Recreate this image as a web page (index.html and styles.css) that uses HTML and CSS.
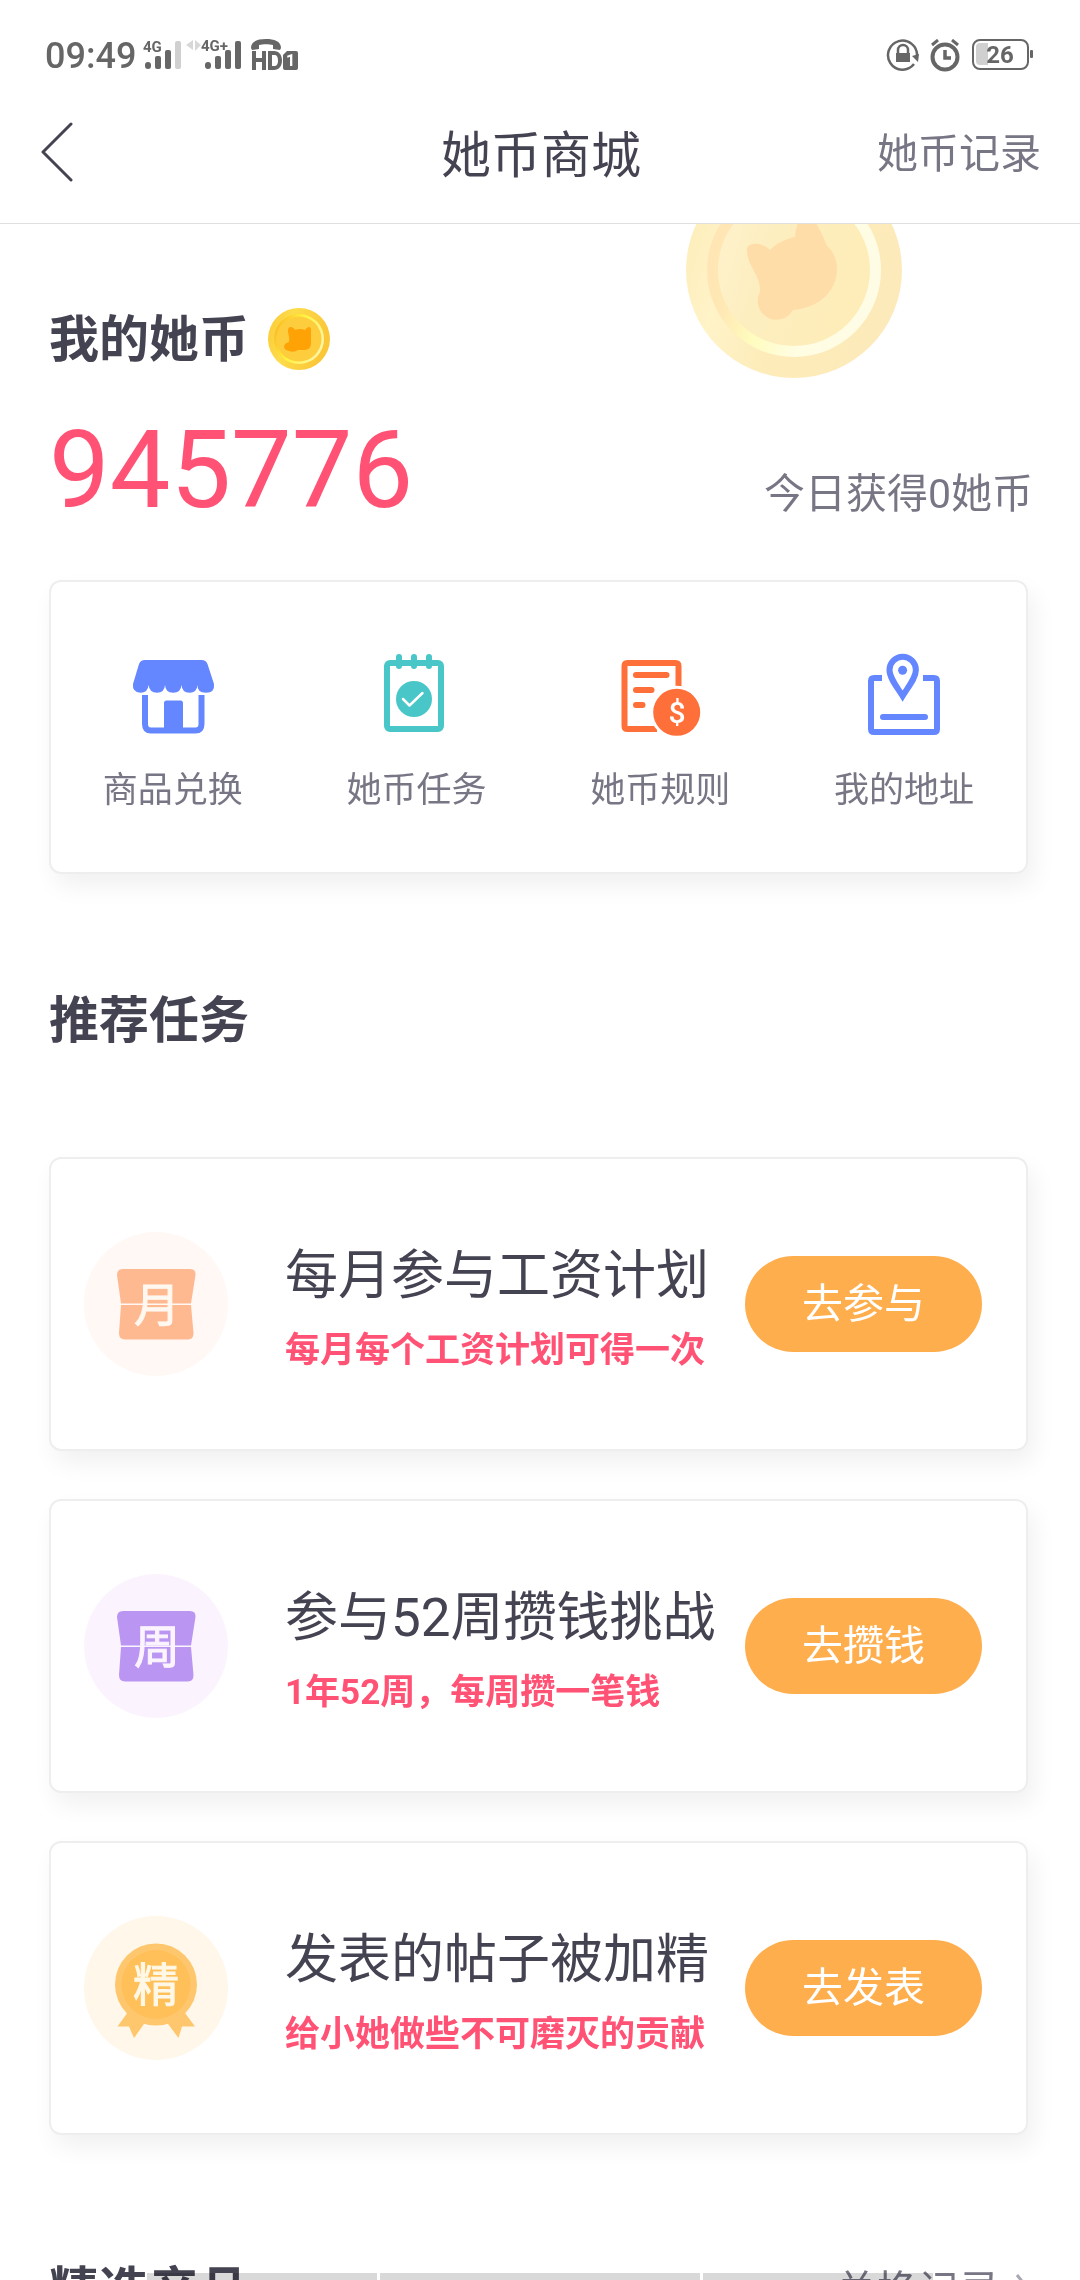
FILE: index.html
```html
<!DOCTYPE html>
<html lang="zh-CN">
<head>
<meta charset="utf-8">
<meta name="viewport" content="width=device-width, initial-scale=1">
<title>她币商城</title>
<link rel="stylesheet" href="styles.css">
</head>
<body>
<div class="app">
  <div class="status">
    <div class="status-group">
      <span class="clock">09:49</span>
      <svg class="signal" width="158" height="36" viewBox="0 2 158 36" fill="#666">
        <text x="0" y="16" font-size="15">4G</text>
        <rect x="2" y="26" width="6" height="7" rx="3"/>
        <rect x="12" y="20" width="6" height="13" rx="2"/>
        <rect x="22" y="14" width="6" height="19" rx="2"/>
        <rect x="32" y="5" width="6" height="28" rx="2" fill="#d0d0d0"/>
        <path d="M50 4v10l-7-5zM52 4l6 5-6 6z" fill="#d8d8d8"/>
        <text x="58" y="15" font-size="15">4G+</text>
        <rect x="62" y="26" width="6" height="7" rx="3"/>
        <rect x="72" y="20" width="6" height="13" rx="2"/>
        <rect x="82" y="14" width="6" height="19" rx="2"/>
        <rect x="92" y="5" width="6" height="28" rx="2"/>
        <path d="M108 12C108 5 115 3 123 3s15 2 15 9l-1 2-7-1V9c-4-1-10-1-14 0v4l-7 1z"/>
        <path d="M109 15h4v7h6v-7h4v19h-4v-8h-6v8h-4zM125 15h6c5 0 8 4 8 9.500s-3 9.500-8 9.500h-6zM129 19v11h2c3 0 4-2 4-5.500s-1-5.500-4-5.500z" fill-rule="evenodd"/>
        <path d="M144 15h9q2 0 2 2v15q0 2-2 2h-11q-2 0-2-2V19z"/>
        <text x="143" y="30" font-size="16" fill="#fff">1</text>
      </svg>
    </div>
    <div class="status-group">
      <svg width="34" height="34" viewBox="0 1 34 34" fill="none" stroke="#666" stroke-width="2.500">
        <path d="M31 18A14.500 14.500 0 1 0 28 26"/>
        <path d="M26 18l7-2-1 8z" fill="#666" stroke="none"/>
        <path d="M12 16v-4a5 5 0 0 1 10 0v4"/>
        <rect x="10" y="15" width="14" height="9" fill="#666" stroke="none"/>
      </svg>
      <svg width="30" height="34" viewBox="0 1 30 34" fill="none" stroke="#666" stroke-width="4">
        <circle cx="15" cy="19" r="12.500"/>
        <path d="M15 12v8h6" stroke-width="3.500"/>
        <path d="M2 7l6-5M28 7l-6-5" stroke-width="3"/>
      </svg>
      <svg class="battery" width="62" height="34" viewBox="0 2 62 34">
        <rect x="2" y="3" width="55" height="29" rx="7" fill="none" stroke="#666" stroke-width="2"/>
        <path d="M17 6v22H9q-4 0-4-4V10q0-4 4-4z" fill="#d0d0d0"/>
        <rect x="59" y="13" width="3" height="8" rx="1" fill="#666"/>
        <text x="29" y="26" font-size="24" text-anchor="middle" fill="#666">26</text>
      </svg>
    </div>
  </div>

  <header class="nav">
    <button class="back" type="button" aria-label="返回">
      <svg width="32" height="60" viewBox="0 0 32 60" fill="none" stroke="#444352" stroke-width="3" stroke-linecap="round" stroke-linejoin="round"><path d="M30 2L2 30l28 28"/></svg>
    </button>
    <h1>她币商城</h1>
    <a class="nav-link" href="#records">她币记录</a>
  </header>

  <main class="content">
    <svg class="coin-bg" width="218" height="218" viewBox="0 0 218 218">
      <defs>
        <linearGradient id="rim" x1="0" y1="0" x2="1" y2="0.300"><stop offset="0" stop-color="#fdebb5"/><stop offset=".3" stop-color="#fff3c8"/><stop offset=".6" stop-color="#fdecb9"/><stop offset="1" stop-color="#fdeaba"/></linearGradient>
        <linearGradient id="ring" x1="0" y1="0.300" x2="1" y2=".6"><stop offset="0" stop-color="#ffe5b4"/><stop offset=".2" stop-color="#ffe8b4"/><stop offset=".4" stop-color="#fffcbe"/><stop offset=".65" stop-color="#fffde2"/><stop offset="1" stop-color="#fffce6"/></linearGradient>
        <linearGradient id="face" x1="0" y1="0" x2="1" y2="0.300"><stop offset="0" stop-color="#fff3ce"/><stop offset=".4" stop-color="#fdeec0"/><stop offset="1" stop-color="#feedb8"/></linearGradient>
      </defs>
      <circle cx="109" cy="109" r="108" fill="url(#rim)"/>
      <circle cx="109" cy="109" r="87" fill="url(#ring)"/>
      <circle cx="109" cy="109" r="76" fill="url(#face)"/>
      <path d="M62 90C61 83 69 82 74 83C79 84 82 86 85 89C92 82 100 78 110 76C111 66 113 58 120 52C127 52 138 73 142 85C149 91 152 99 152 108C152 130 134 147 108 149A18.300 18.300 0 1 1 75 131C76 114 63 107 62 90Z" fill="#ffdda8"/>
    </svg>

    <section class="balance">
      <h2 class="heading">我的她币
        <svg width="64" height="64" viewBox="0 0 64 64">
          <defs><linearGradient id="srim" x1="0" y1="0" x2="1" y2="0.300"><stop offset="0" stop-color="#fbc838"/><stop offset=".4" stop-color="#fddc4a"/><stop offset="1" stop-color="#fbc638"/></linearGradient>
          <linearGradient id="sring" x1="0" y1="0.200" x2="1" y2=".6"><stop offset="0" stop-color="#fbb522"/><stop offset=".45" stop-color="#fff23c"/><stop offset="1" stop-color="#fff6a8"/></linearGradient></defs>
          <circle cx="32" cy="31" r="31" fill="url(#srim)"/>
          <circle cx="32" cy="31" r="25" fill="url(#sring)"/>
          <circle cx="32" cy="31" r="22.500" fill="#fdcd3e"/>
          <path d="M21 22C21 18 26 18 28 22Q33 20 38 22C41 18 44 18 44 22V35C44 40 41 42 37 42H31Q27 45 22 43C15 42 16 35 22 34C23 29 21 27 21 22Z" fill="#ffa205"/>
        </svg>
      </h2>
      <div class="balance-row">
        <strong class="amount">945776</strong>
        <span class="today">今日获得0她币</span>
      </div>
    </section>

    <nav class="card shortcuts">
      <a href="#exchange">
        <svg width="90" height="90" viewBox="0 0 90 90">
          <path d="M17 10H73.500Q78 10 79.500 14L86 34Q87 42.700 78 42.700T69.500 35Q69 42.700 61.500 42.700T53.500 35Q53 42.700 45.200 42.700T37 35Q36.500 42.700 29 42.700T20.500 35Q20 42.700 12.500 42.700Q4 42 5 34L11 14Q12.500 10 17 10Z" fill="#6487ff"/>
          <path d="M17 45V74Q17 80.500 23 80.500H67.500Q73.500 80.500 73.500 74V45" fill="none" stroke="#6487ff" stroke-width="6"/>
          <path d="M36 81V53q0-2.500 2.500-2.500h14q2.500 0 2.500 2.500v28z" fill="#6487ff"/>
        </svg>
        <span>商品兑换</span>
      </a>
      <a href="#tasks">
        <svg width="90" height="90" viewBox="0 0 90 90" fill="none" stroke="#48c6c8" stroke-width="6" stroke-linecap="round" stroke-linejoin="round">
          <rect x="15" y="13" width="54" height="66" rx="3"/>
          <path d="M27 7v9M42 7v9M57 7v9"/>
          <circle cx="42" cy="49" r="18" fill="#48c6c8" stroke="none"/>
          <path d="M31 49l6.500 6.500L50.500 43" stroke="#fff" stroke-width="2.500"/>
        </svg>
        <span>她币任务</span>
      </a>
      <a href="#rules">
        <svg width="90" height="90" viewBox="0 0 90 90" fill="none" stroke="#ff6f3a" stroke-width="6">
          <path d="M63.500 36V16q0-3-3-3H12.500q-3 0-3 3V76q0 3 3 3H42"/>
          <path d="M21 25H51.500M21 40H36.500M21 55H27.500" stroke-linecap="round"/>
          <circle cx="61.700" cy="62.300" r="25" fill="#ff6f3a" stroke="#fff" stroke-width="3"/>
          <text x="62" y="73" font-size="30" font-weight="500" text-anchor="middle" fill="#fff" stroke="none">$</text>
        </svg>
        <span>她币规则</span>
      </a>
      <a href="#address">
        <svg width="90" height="90" viewBox="0 0 90 90" fill="none" stroke="#6487ff" stroke-width="6">
          <path d="M23 28H15q-3 0-3 3V79q0 3 3 3H75q3 0 3-3V31q0-3-3-3H64"/>
          <path d="M43.600 46C38 37 30.500 28 30.500 20a13.200 13.200 0 0 1 26.400 0C56.900 28 49 37 43.600 46Z"/>
          <circle cx="43.600" cy="20.300" r="4.500" fill="#6487ff" stroke="none"/>
          <path d="M24 67H66" stroke-linecap="round"/>
        </svg>
        <span>我的地址</span>
      </a>
    </nav>

    <section id="tasks">
      <h2 class="heading task-heading">推荐任务</h2>
      <div class="task-list">
        <article class="card task">
          <svg class="badge" width="144" height="144" viewBox="0 0 144 144">
            <circle cx="72" cy="72" r="72" fill="#fff8f4"/>
            <path d="M39 37H106Q112 37 111.500 43L107 71.500H37L33 43Q33 37 39 37ZM37 73H107L109.500 101Q109.500 107.500 104 107.500H41Q35 107.500 35 101Z" fill="#ffb991"/>
            <text x="73" y="89" font-size="46" text-anchor="middle" fill="#fff8f0" stroke="#fff8f0">月</text>
          </svg>
          <div class="task-text"><h3>每月参与工资计划</h3><p>每月每个工资计划可得一次</p></div>
          <button class="go" type="button">去参与</button>
        </article>
        <article class="card task">
          <svg class="badge" width="144" height="144" viewBox="0 0 144 144">
            <circle cx="72" cy="72" r="72" fill="#fbf4ff"/>
            <path d="M39 37H106Q112 37 111.500 43L107 71.500H37L33 43Q33 37 39 37ZM37 73H107L109.500 101Q109.500 107.500 104 107.500H41Q35 107.500 35 101Z" fill="#ba96f2"/>
            <text x="73" y="89" font-size="46" text-anchor="middle" fill="#fbf4ff" stroke="#fbf4ff">周</text>
          </svg>
          <div class="task-text"><h3>参与52周攒钱挑战</h3><p>1年52周，每周攒一笔钱</p></div>
          <button class="go" type="button">去攒钱</button>
        </article>
        <article class="card task">
          <svg class="badge" width="144" height="144" viewBox="0 0 144 144">
            <circle cx="72" cy="72" r="72" fill="#fff7e9"/>
            <path d="M44 96L33.500 110.500H45L50 122L60 108H84L94.500 122L98 110.500H111L101 97Z" fill="#ffc76d"/>
            <path d="M60 108.500Q72 111 84 108.500L88 114H57Z" fill="#fff7e9"/>
            <circle cx="72" cy="68.500" r="41" fill="#ffc76d"/>
            <circle cx="72" cy="68.500" r="34.500" fill="#ffc05a"/>
            <text x="72" y="85" font-size="46" text-anchor="middle" fill="#fff8e6" stroke="#fff8e6">精</text>
          </svg>
          <div class="task-text"><h3>发表的帖子被加精</h3><p>给小她做些不可磨灭的贡献</p></div>
          <button class="go" type="button">去发表</button>
        </article>
      </div>
    </section>

    <section class="products">
      <h2 class="heading">精选产品</h2>
      <a class="more" href="#records">兑换记录
        <svg width="16" height="36" viewBox="0 0 16 36" fill="none" stroke="#a9a8b5" stroke-width="3"><path d="M1 2l13 16L1 34"/></svg>
      </a>
    </section>
  </main>

  <div class="gesture-bar"><i></i><i></i><i></i></div>
</div>
</body>
</html>
```

FILE: styles.css
```css
* { box-sizing: border-box; }

body {
  margin: 0;
  background: #fff;
  color: #444352;
  font-family: Roboto, "Noto Sans CJK SC", sans-serif;
}

h1, h2, h3, p { margin: 0; }
a { color: inherit; text-decoration: none; }
svg { display: block; flex: none; }
button { border: 0; padding: 0; background: none; color: inherit; font: inherit; }

.app {
  display: flex;
  flex-direction: column;
  height: 100vh;
  overflow: hidden;
}

/* status bar */
.status {
  flex: none;
  display: flex;
  justify-content: space-between;
  align-items: center;
  height: 84px;
  padding: 28px 47px 0 45px;
  color: #666;
}
.status-group { display: flex; align-items: center; gap: 10px; }
.status text { font-weight: 700; }
.clock { font-size: 36px; font-weight: 500; line-height: 44px; }
.signal { margin-left: -3px; }
.battery { margin-left: 1px; }

/* title bar */
.nav {
  flex: none;
  display: grid;
  grid-template-columns: 1fr auto 1fr;
  align-items: center;
  height: 140px;
  padding: 0 39px 0 41px;
  border-bottom: 1px solid #e0e0e0;
}
.nav h1 { padding-top: 4px; font-size: 50px; font-weight: 400; line-height: 64px; }
.back { justify-self: start; padding-bottom: 4px; }
.nav-link { justify-self: end; color: #777684; font-size: 41px; line-height: 56px; }

.content {
  position: relative;
  flex: 1;
  min-height: 0;
  padding: 84px 52px 0 49px;
  overflow-y: auto;
  scrollbar-width: none;
}
.coin-bg { position: absolute; top: -63px; right: 177px; z-index: -1; }

.heading {
  display: flex;
  align-items: center;
  gap: 18px;
  font-size: 50px;
  font-weight: 700;
  line-height: 64px;
}

.balance-row {
  display: flex;
  justify-content: space-between;
  align-items: flex-end;
  margin: 42px -5px 0 0;
}
.amount { color: #ff5274; font-size: 108px; font-weight: 400; line-height: 112px; }
.today { padding-bottom: 4px; color: #777684; font-size: 41px; line-height: 56px; }

.card {
  border: 2px solid #eee;
  border-radius: 12px;
  background: #fff;
  box-shadow: 6px 12px 24px rgba(0, 0, 0, .06);
}

.shortcuts {
  display: grid;
  grid-template-columns: repeat(4, 1fr);
  margin-top: 54px;
  padding: 68px 0 57px;
  color: #777684;
  font-size: 35px;
  line-height: 48px;
}
.shortcuts a { display: flex; flex-direction: column; align-items: center; gap: 27px; }

.task-heading { margin: 115px 0 104px; }
.task-list { display: flex; flex-direction: column; gap: 48px; }
.task {
  display: flex;
  align-items: center;
  min-height: 294px;
  padding: 0 44px 0 33px;
}
.task-text { flex: 1; margin-left: 57px; padding-top: 7px; white-space: nowrap; }
.task h3 { font-size: 53px; font-weight: 400; line-height: 72px; }
.task p { margin-top: 15px; color: #ff5274; font-size: 35px; font-weight: 700; line-height: 48px; }
.go {
  flex: none;
  width: 237px;
  height: 96px;
  border-radius: 48px;
  background: #ffae4e;
  color: #fff;
  font-size: 41px;
  line-height: 56px;
}

.products {
  display: flex;
  justify-content: space-between;
  align-items: center;
  margin-top: 124px;
  padding-bottom: 48px;
}
.more { display: flex; align-items: center; gap: 16px; margin-right: -4px; color: #777684; font-size: 41px; line-height: 56px; }

/* system gesture hints */
.gesture-bar {
  position: fixed;
  right: 0;
  bottom: 0;
  left: 0;
  display: grid;
  grid-template-columns: 230px 320px 230px;
  justify-content: center;
  gap: 3px;
}
.gesture-bar i { height: 7px; background: rgba(0, 0, 0, .15); }
```
